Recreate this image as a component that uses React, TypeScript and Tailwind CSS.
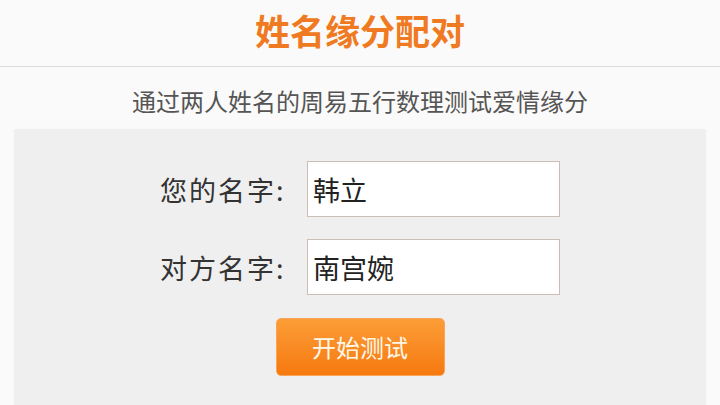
import { useState } from 'react'

const Field = ({ label, value, onChange }: { label: string; value: string; onChange: (v: string) => void }) => (
  <div className="flex items-center justify-center">
    <label className="w-[133px] text-[27px] leading-none tracking-[2px] text-[#333]">{label}</label>
    <input
      value={value}
      onChange={(e) => onChange(e.target.value)}
      className="ml-[14px] h-[56px] w-[253px] border border-[#cbbdb5] bg-white px-[5px] text-[27px] text-[#222] outline-none"
    />
  </div>
)

export default function App() {
  const [me, setMe] = useState('韩立')
  const [other, setOther] = useState('南宫婉')

  return (
    <div
      className="flex h-[405px] w-[720px] flex-col overflow-hidden bg-[#fbfafa]"
      style={{ fontFamily: '"Noto Sans CJK SC", "Noto Sans", sans-serif' }}
    >
      {/* Header */}
      <div className="flex h-[67px] items-center justify-center border-b border-[#e2dcd8]">
        <h1 className="mb-[8px] text-[35px] font-bold leading-none text-[#f07a22]">姓名缘分配对</h1>
      </div>

      <p className="pt-[22px] text-center text-[24px] leading-none text-[#555]">通过两人姓名的周易五行数理测试爱情缘分</p>

      {/* Form panel */}
      <div className="mx-[14px] mt-[16px] flex flex-1 flex-col bg-[#efeff0] pt-[32px]">
        <Field label="您的名字:" value={me} onChange={setMe} />
        <div className="h-[22px]" />
        <Field label="对方名字:" value={other} onChange={setOther} />
        <div className="mt-[23px] flex justify-center">
          <button className="h-[58px] w-[169px] rounded-[5px] border border-[#f9a45a] bg-gradient-to-b from-[#fc9d35] to-[#f6790c] text-[24px] text-[#fff7e8]">
            开始测试
          </button>
        </div>
      </div>
    </div>
  )
}
